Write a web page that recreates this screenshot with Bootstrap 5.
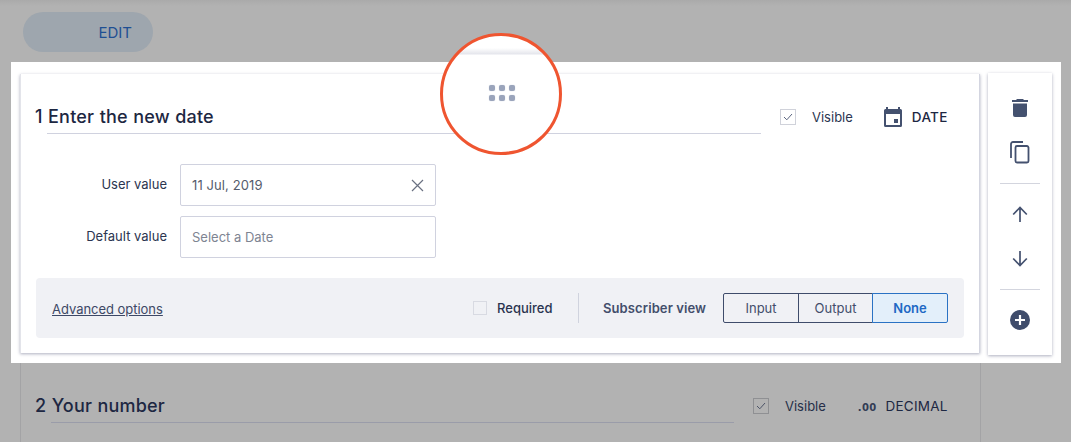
<!DOCTYPE html>
<html lang="en">
<head>
<meta charset="utf-8">
<title>Form editor</title>
<link href="https://cdn.jsdelivr.net/npm/bootstrap@5.3.0/dist/css/bootstrap.min.css" rel="stylesheet">
<style>
html,body{height:100%}
body{width:1071px;height:442px;overflow:hidden;position:relative;background:#b2b2b2;font-family:Inter,"Liberation Sans",sans-serif;color:#1d2742}
.top-zone{height:62px;padding:12px 0 0 23px;background:linear-gradient(#aaaaaa 0,#b2b2b2 6px)}
.edit-pill{width:130px;height:40px;border-radius:20px;background:#9ea6ae;color:#1e4f93;font-size:15px;padding:0 21px 0 0;line-height:41px;text-align:right}
.spot{width:1050px;height:301px;margin-left:11px;background:#fff;padding:12px 9px 0 9px;gap:8px}
.q-card{width:960px;height:279px;background:#fff;border-right:1px solid #d3d5e0;border-left:1px solid #e3e4ea;box-shadow:0 1px 3px rgba(70,75,110,.45);padding:0 15px 0 14px}
.q-head{height:59px;padding-top:27px}
.q-title{font-size:18px;font-weight:500;line-height:32px;letter-spacing:.2px;word-spacing:.4px;width:727px;height:33px;position:relative;white-space:nowrap}
.q-title span{display:block;border-bottom:1px solid #d0d2df;margin-left:12px;height:33px;width:714px}
.q-title b{font-weight:500;position:absolute;left:0;top:0}
.vis-box{width:16px;height:16px;border:1px solid #d0d2da;background:#fff;flex:none}
.vis-text{font-size:13px;color:#2b3550;padding-top:1px}
.type-text{font-size:13.5px;font-weight:500;letter-spacing:.3px;padding-top:1px}
.field-row{height:42px;margin-bottom:10px}
.field-label{width:132px;text-align:right;font-size:13px;color:#2b3550;padding-right:0;margin-right:13px}
.field-box{width:256px;height:42px;border:1px solid #d0d2df;border-radius:2px;padding:1px 11px 0;font-size:13px;color:#555c6c;letter-spacing:.1px}
.field-hint{color:#7e8492;letter-spacing:0}
.foot{width:928px;height:60px;margin:20px 0 0 1px;background:#f0f1f5;border-radius:4px;padding:0 16px}
.adv{font-size:13px;color:#3d4866;text-decoration:underline;letter-spacing:-.03px}
.req-box{width:14px;height:14px;border:1px solid #d8dae2;background:#f0f1f5;margin-right:10px}
.req-text{font-size:13px;font-weight:500;color:#2a3450;width:56px;white-space:nowrap;padding-top:1px}
.foot-rule{width:1px;height:30px;background:#d0d3de;margin:0 24px 0 25px}
.sub-text{font-size:13px;font-weight:600;color:#434e6b;width:103px;margin-right:17px;white-space:nowrap;letter-spacing:.1px;padding-top:1px}
.seg{width:75px;height:30px;border:1px solid #3f4c6b;margin-left:-1px;font-size:13px;color:#434e6b;line-height:28px;text-align:center;background:transparent}
.seg:first-child{margin-left:0;width:76px;border-radius:2px 0 0 2px}
.seg-on{width:76px;background:#e3effa;border-color:#2a72c4;color:#2068c4;font-weight:600;border-radius:0 2px 2px 0;position:relative}
.side{width:64px;height:282px;margin-top:-1px;background:#fff;box-shadow:0 1px 3px rgba(70,75,110,.45)}
.side-rule{width:40px;height:1px;background:#d3d5de;margin:0 auto}
.side-ico{height:45px}
.side-ico-low{height:44px;padding-bottom:2px}
.ghost{width:961px;height:79px;margin-left:20px;border-left:1px solid #a3a3a5;border-right:1px solid #a3a3a5;padding:0 15px 0 14px}
.ghost-head{padding-top:27px}
.ghost .q-title{width:698px}
.ghost .q-title span{margin-left:16px;width:683px;border-color:#9a9ca9}
.ghost .vis-box{background:transparent;border-color:#8f9093}
.ghost .vis-text{color:#262f48}
.dec{font-size:10px;font-weight:700;color:#333c55;letter-spacing:.3px;font-family:"DejaVu Sans",sans-serif;padding-top:3px}
.type-dec{font-weight:400;letter-spacing:.25px}
.lens{position:absolute;left:440px;top:33px;width:122px;height:122px;border-radius:50%;border:3px solid #ef5530;background:linear-gradient(#fff 0,#fff 12px,#e9eaef 17px,#e4e5ec 18px,#fff 19px)}
.lens-dots{display:grid;grid-template-columns:repeat(3,6px);gap:4px;position:relative;left:46px;top:49px;width:26px}
.lens-dots i{width:6px;height:6px;border-radius:35%;background:#9aa4bb;display:block;box-shadow:0 0 1px #b3bbcd}
</style>
</head>
<body>
<div class="top-zone">
  <div class="edit-pill">EDIT</div>
</div>
<div class="spot d-flex">
  <div class="q-card">
    <div class="q-head d-flex">
      <div class="q-title"><b>1 Enter the new date</b><span></span></div>
      <div class="d-flex align-items-center" style="height:32px">
        <div class="vis-box d-flex align-items-center justify-content-center" style="margin-left:18px">
          <svg width="10" height="8" viewBox="0 0 10 8"><path d="M1 4l2.800 2.800L9 1" fill="none" stroke="#5c6680" stroke-width="1"/></svg>
        </div>
        <span class="vis-text ms-3">Visible</span>
        <svg style="margin:0 9px 0 30px" width="20" height="22" viewBox="0 0 20 22"><path d="M5 1v2h10V1h2v2h.5A1.500 1.500 0 0 1 19 4.500v15a1.500 1.500 0 0 1-1.500 1.500h-15A1.500 1.500 0 0 1 1 19.500v-15A1.500 1.500 0 0 1 2.500 3H3V1zM3 8v11h14V8zm8 5h4v4h-4z" fill="#44516f" fill-rule="evenodd"/></svg>
        <span class="type-text">DATE</span>
      </div>
    </div>
    <div style="height:31px"></div>
    <div class="field-row d-flex align-items-center">
      <div class="field-label">User value</div>
      <div class="field-box d-flex align-items-center justify-content-between">
        <span>11 Jul, 2019</span>
        <svg width="13" height="13" viewBox="0 0 13 13"><path d="M1 1l11 11M12 1L1 12" stroke="#6a7182" stroke-width="1.200" fill="none"/></svg>
      </div>
    </div>
    <div class="field-row d-flex align-items-center">
      <div class="field-label">Default value</div>
      <div class="field-box d-flex align-items-center field-hint">Select a Date</div>
    </div>
    <div class="foot d-flex align-items-center">
      <a class="adv me-auto mt-1" href="#">Advanced options</a>
      <div class="req-box"></div>
      <div class="req-text">Required</div>
      <div class="foot-rule"></div>
      <div class="sub-text">Subscriber view</div>
      <div class="d-flex">
        <div class="seg">Input</div>
        <div class="seg">Output</div>
        <div class="seg seg-on">None</div>
      </div>
    </div>
  </div>
  <div class="side">
    <div style="height:12px"></div>
    <div class="side-ico d-flex align-items-center justify-content-center">
      <svg width="16" height="20" viewBox="0 0 16 20"><path d="M5 1h6l1 1h4v2H0V2h4zM1 5.500h14V17a2 2 0 0 1-2 2H3a2 2 0 0 1-2-2z" fill="#44516f"/></svg>
    </div>
    <div class="side-ico d-flex align-items-center justify-content-center">
      <svg width="20" height="23" viewBox="0 0 20 23"><path d="M13 1H3a2 2 0 0 0-2 2v14M7 5h10a2 2 0 0 1 1.500 1.500V20a1.500 1.500 0 0 1-1.500 1.500H7A1.500 1.500 0 0 1 5.500 20V6.500A1.500 1.500 0 0 1 7 5z" fill="none" stroke="#44516f" stroke-width="1.800"/></svg>
    </div>
    <div style="height:8px"></div>
    <div class="side-rule"></div>
    <div style="height:8px"></div>
    <div class="side-ico d-flex align-items-center justify-content-center">
      <svg width="16" height="17" viewBox="0 0 16 17"><path d="M8 16V2M1.200 8.500L8 1.500l6.800 7" fill="none" stroke="#44516f" stroke-width="1.700"/></svg>
    </div>
    <div class="side-ico-low d-flex align-items-center justify-content-center">
      <svg width="16" height="17" viewBox="0 0 16 17"><path d="M8 1v14M1.200 8.500L8 15.500l6.800-7" fill="none" stroke="#44516f" stroke-width="1.700"/></svg>
    </div>
    <div style="height:8px"></div>
    <div class="side-rule"></div>
    <div style="height:7px"></div>
    <div class="side-ico d-flex align-items-center justify-content-center">
      <svg width="20" height="20" viewBox="0 0 20 20"><circle cx="10" cy="10" r="10" fill="#3f4c6b"/><path d="M10 5v10M5 10h10" stroke="#fff" stroke-width="2.200"/></svg>
    </div>
  </div>
</div>
<div class="ghost">
  <div class="ghost-head d-flex">
    <div class="q-title"><b>2 Your number</b><span></span></div>
    <div class="d-flex align-items-center" style="height:32px">
      <div class="vis-box d-flex align-items-center justify-content-center" style="margin-left:20px">
        <svg width="10" height="8" viewBox="0 0 10 8"><path d="M1 4l2.800 2.800L9 1" fill="none" stroke="#4d5468" stroke-width="1"/></svg>
      </div>
      <span class="vis-text ms-3">Visible</span>
      <span class="dec" style="margin-left:32px">.00</span>
      <span class="type-text type-dec" style="margin-left:9px">DECIMAL</span>
    </div>
  </div>
</div>
<div class="lens">
  <div class="lens-dots"><i></i><i></i><i></i><i></i><i></i><i></i></div>
</div>
<script src="https://cdn.jsdelivr.net/npm/bootstrap@5.3.0/dist/js/bootstrap.bundle.min.js"></script>
</body>
</html>
